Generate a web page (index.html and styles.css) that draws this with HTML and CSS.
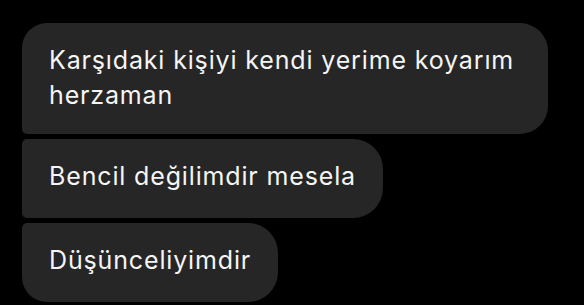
FILE: index.html
```html
<!DOCTYPE html>
<html lang="tr">
<head>
<meta charset="utf-8">
<link rel="stylesheet" href="styles.css">
</head>
<body>
<div class="thread">
  <div class="bubble bubble-first">Karşıdaki kişiyi kendi yerime koyarım herzaman</div>
  <div class="bubble bubble-middle">Bencil değilimdir mesela</div>
  <div class="bubble bubble-last">Düşünceliyimdir</div>
</div>
</body>
</html>
```
FILE: styles.css
```css
html, body {
  margin: 0;
  padding: 0;
  background: #000;
}
body {
  width: 584px;
  height: 305px;
  overflow: hidden;
}
.thread {
  display: flex;
  flex-direction: column;
  align-items: flex-start;
  gap: 5px;
  padding: 23px 0 0 22px;
}
.bubble {
  box-sizing: border-box;
  max-width: 526px;
  background: #262626;
  color: #f5f5f5;
  font-family: Inter, "Noto Sans", sans-serif;
  font-size: 25px;
  letter-spacing: 0.85px;
  line-height: 35px;
  padding: 20px 27px 24px 27px;
  border-radius: 28px;
}
.bubble-first {
  width: 526px;
  border-radius: 25px 28px 28px 5px;
  padding-bottom: 21px;
}
.bubble-middle {
  border-radius: 5px 30px 30px 5px;
}
.bubble-last {
  border-radius: 5px 30px 30px 25px;
}
```
